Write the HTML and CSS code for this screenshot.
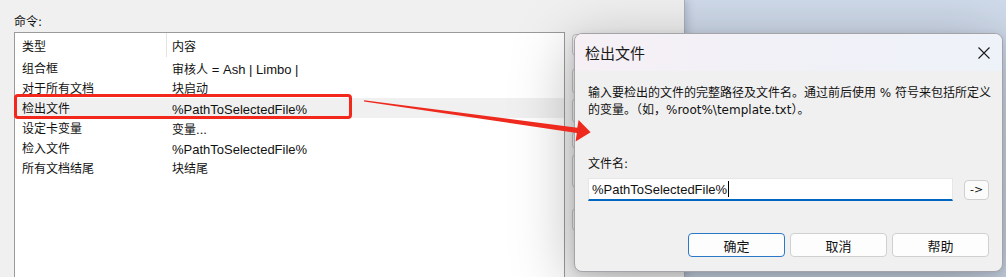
FILE: index.html
```html
<!DOCTYPE html>
<html lang="zh-CN">
<head>
<meta charset="utf-8">
<title>检出文件</title>
<link rel="stylesheet" href="styles.css">
</head>
<body>
<div class="screen">
  <div class="app">
    <div class="main-col">
      <div class="cmd-label">命令:</div>
      <div class="list">
        <div class="row head"><div class="c1">类型</div><div class="c2">内容</div></div>
        <div class="row"><div class="c1">组合框</div><div class="c2">审核人 <span class="lat">= Ash | Limbo |</span></div></div>
        <div class="row"><div class="c1">对于所有文档</div><div class="c2">块启动</div></div>
        <div class="row sel"><div class="c1">检出文件</div><div class="c2"><span class="lat">%PathToSelectedFile%</span></div></div>
        <div class="row"><div class="c1">设定卡变量</div><div class="c2">变量<span class="lat">...</span></div></div>
        <div class="row"><div class="c1">检入文件</div><div class="c2"><span class="lat">%PathToSelectedFile%</span></div></div>
        <div class="row"><div class="c1">所有文档结尾</div><div class="c2">块结尾</div></div>
      </div>
    </div>
    <div class="side-col">
      <div class="ghost-btn g1"></div>
      <div class="ghost-btn g2"></div>
      <div class="ghost-btn g3"></div>
      <div class="ghost-btn g4"></div>
      <div class="ghost-btn g5"></div>
      <div class="ghost-btn g6"></div>
    </div>
  </div>
  <div class="desktop"></div>

  <div class="highlight"></div>
  <svg class="arrow" width="1006" height="277" viewBox="0 0 1006 277">
    <polygon points="364,100.3 577.3,127.7 578.6,120 590.6,132.2 575.6,141.6 576.8,132.9 364,101.5" fill="#ee2a1e"/>
  </svg>

  <div class="dialog">
    <div class="titlebar">
      <div class="title">检出文件</div>
      <svg class="close" width="12" height="12" viewBox="0 0 12 12">
        <path d="M0.5 0.5 L11.5 11.5 M11.5 0.5 L0.5 11.5" stroke="#1b1b1b" stroke-width="1.1" fill="none"/>
      </svg>
    </div>
    <div class="dbody">
      <div class="desc">
        <span class="line">输入要检出的文件的完整路径及文件名。通过前后使用 % 符号来包括所定义</span>
        <span class="line">的变量。（如，%root%\template.txt）。</span>
      </div>
      <div class="field-label">文件名:</div>
      <div class="input-row">
        <div class="input"><span class="lat">%PathToSelectedFile%</span><span class="caret"></span></div>
        <div class="small-btn">-&gt;</div>
      </div>
      <div class="buttons">
        <div class="btn default">确定</div>
        <div class="btn">取消</div>
        <div class="btn">帮助</div>
      </div>
    </div>
  </div>
</div>
</body>
</html>
```

FILE: styles.css
```css
* { box-sizing: border-box; }
html, body { margin: 0; padding: 0; }
body {
  font-family: "DejaVu Sans", "Noto Sans CJK SC", sans-serif;
  font-size: 12px;
  color: #111;
  background: #f0f0f0;
}
.lat {
  font-family: "Liberation Sans", "Noto Sans CJK SC", sans-serif;
  font-size: 13px;
}
.screen {
  position: relative;
  width: 1006px;
  height: 277px;
  overflow: hidden;
  display: flex;
}
.app {
  position: relative;
  z-index: 1;
  width: 685px;
  height: 277px;
  background: #f0f0f0;
  border-right: 1px solid #a8b0bc;
  box-shadow: 2px 0 8px rgba(60, 70, 90, 0.25);
  padding: 14px 0 0 14px;
  display: flex;
}
.main-col { width: 551px; }
.side-col {
  margin-left: 7px;
  width: 80px;
  display: flex;
  flex-direction: column;
}
.ghost-btn {
  height: 24px;
  border: 1px solid #c4c4c4;
  border-radius: 4px;
  background: #f8f8f8;
}
.g1 { margin-top: 20px; height: 22px; }
.g2 { margin-top: 12px; height: 26px; }
.g3 { margin-top: 4px; height: 25px; }
.g4 { margin-top: 8px; height: 18px; }
.g5 { margin-top: 5px; height: 34px; }
.g6 { margin-top: 20px; height: 23px; }
.cmd-label {
  line-height: 17px;
  height: 17px;
  margin-bottom: 1px;
}
.list {
  width: 551px;
  height: 260px;
  background: #fff;
  border: 1px solid #9a9a9a;
  border-bottom: none;
}
.row {
  display: flex;
  height: 20px;
  padding-top: 3px;
  line-height: 17px;
  white-space: nowrap;
}
.row.head {
  height: 25px;
  padding-top: 6px;
}
.row .c1 {
  width: 151px;
  padding-left: 7px;
}
.row .c2 {
  padding-left: 6px;
}
.row.head .c2 {
  border-left: 1px solid #e3e3e3;
  margin-top: -6px;
  padding-top: 6px;
  padding-left: 5px;
  height: 24px;
}
.row.sel { background: #f0f0f0; }
.desktop {
  flex: 1;
  background: linear-gradient(to bottom, #cfdaea, #c4cfdf);
}
.highlight {
  position: absolute;
  left: 14px;
  top: 94px;
  width: 338px;
  height: 25px;
  border: 3px solid #f3281d;
  border-radius: 4px;
  z-index: 2;
}
.arrow {
  position: absolute;
  left: 0;
  top: 0;
  z-index: 4;
  pointer-events: none;
}
.dialog {
  position: absolute;
  left: 574px;
  top: 33px;
  width: 429px;
  height: 239px;
  z-index: 3;
  background: #f0f0f0;
  border: 1px solid #a4a4a8;
  border-radius: 8px;
  overflow: hidden;
  box-shadow: -4px 10px 60px rgba(0, 0, 0, 0.26), 0 2px 8px rgba(0, 0, 0, 0.12);
  display: flex;
  flex-direction: column;
}
.titlebar {
  height: 37px;
  flex: none;
  display: flex;
  align-items: center;
  justify-content: space-between;
  padding: 0 12px 0 10px;
  background: linear-gradient(to right, #f6f0f5, #f1f1f7 45%, #eef2f9);
}
.title {
  font-size: 15px;
  color: #1a1a1a;
}
.close { display: block; }
.dbody {
  flex: 1;
  padding: 14px 13px 0 13px;
}
.desc .line {
  display: block;
  line-height: 17px;
  white-space: nowrap;
}
.field-label {
  margin-top: 37px;
  line-height: 17px;
}
.input-row {
  margin-top: 5px;
  display: flex;
  align-items: center;
  gap: 11px;
}
.input {
  width: 365px;
  height: 23px;
  background: #fff;
  border: 1px solid #e6e6e6;
  border-bottom: 2px solid #0067c0;
  padding-left: 3px;
  display: flex;
  align-items: center;
  white-space: nowrap;
}
.caret {
  display: inline-block;
  width: 1px;
  height: 16px;
  background: #000;
  margin-left: 1px;
}
.small-btn {
  width: 25px;
  height: 20px;
  border: 1px solid #cfcfcf;
  border-radius: 4px;
  background: #fbfbfb;
  display: flex;
  align-items: center;
  justify-content: center;
  font-size: 11px;
}
.buttons {
  margin-top: 32px;
  display: flex;
  justify-content: flex-end;
  gap: 5px;
}
.btn {
  width: 97px;
  height: 24px;
  border: 1px solid #d0d0d0;
  border-radius: 4px;
  background: #fdfdfd;
  display: flex;
  align-items: center;
  justify-content: center;
  font-size: 13px;
}
.btn.default {
  border-color: #2a78c8;
}
```
